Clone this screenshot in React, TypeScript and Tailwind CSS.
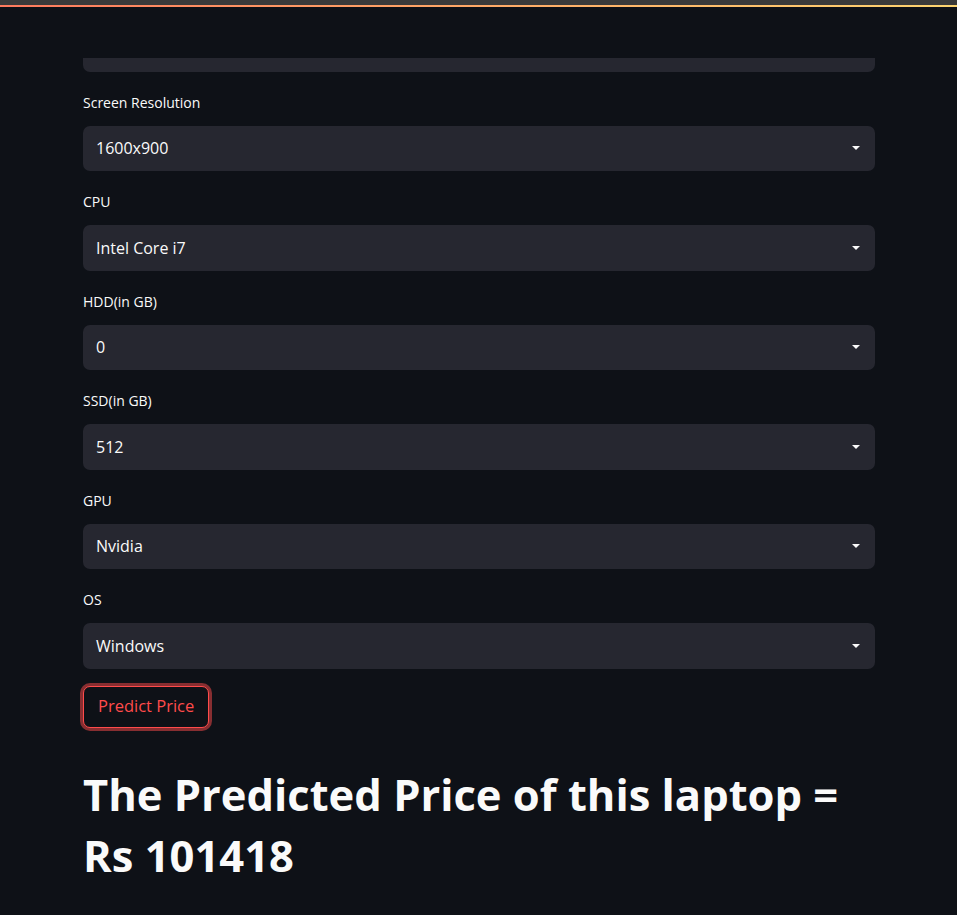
import React from 'react'

const fields = [
  { label: 'Screen Resolution', value: '1600x900' },
  { label: 'CPU', value: 'Intel Core i7' },
  { label: 'HDD(in GB)', value: '0' },
  { label: 'SSD(in GB)', value: '512' },
  { label: 'GPU', value: 'Nvidia' },
  { label: 'OS', value: 'Windows' },
]

function Caret() {
  return (
    <svg width="8" height="4" viewBox="0 0 8 4" className="shrink-0">
      <polygon points="0,0 8,0 4,4" fill="#fafafa" />
    </svg>
  )
}

function SelectBox({ label, value }: { label: string; value: string }) {
  return (
    <div className="flex flex-col">
      <div className="mt-[21px] h-[20px] text-[14px] leading-[20px] text-[#fafafa]">{label}</div>
      <div className="mt-[13px] flex h-[45.5px] items-center justify-between rounded-[7px] bg-[#262730] pl-[13px] pr-[15px]">
        <span className="text-[16px] text-[#fafafa]">{value}</span>
        <Caret />
      </div>
    </div>
  )
}

export default function App() {
  return (
    <div
      className="min-h-[915px] bg-[#0e1117]"
      style={{ fontFamily: '"Open Sans", "Noto Sans", sans-serif' }}
    >
      {/* browser strip + streamlit decoration */}
      <div className="h-[5px] bg-[#3a3a3a]" />
      <div className="h-[2px] bg-gradient-to-r from-[#ff7a5e] to-[#fcd470]" />

      <div className="ml-[83px] w-[792px] pt-[51px]">
        {/* bottom of the previous select, scrolled under the header */}
        <div className="h-[13.5px] rounded-b-[7px] bg-[#262730]" />

        {fields.map(f => (
          <SelectBox key={f.label} label={f.label} value={f.value} />
        ))}

        <button className="mt-[17px] h-[42px] rounded-[7px] border border-[#ff4b4b] bg-[#0e1117] px-[14px] text-[16.5px] text-[#ff4b4b] shadow-[0_0_0_3px_rgba(255,75,75,0.5)]">
          Predict Price
        </button>

        <h1 className="mt-[36.5px] text-[43.5px] font-bold leading-[61px] text-[#fafafa]">
          The Predicted Price of this laptop = Rs 101418
        </h1>
      </div>
    </div>
  )
}
